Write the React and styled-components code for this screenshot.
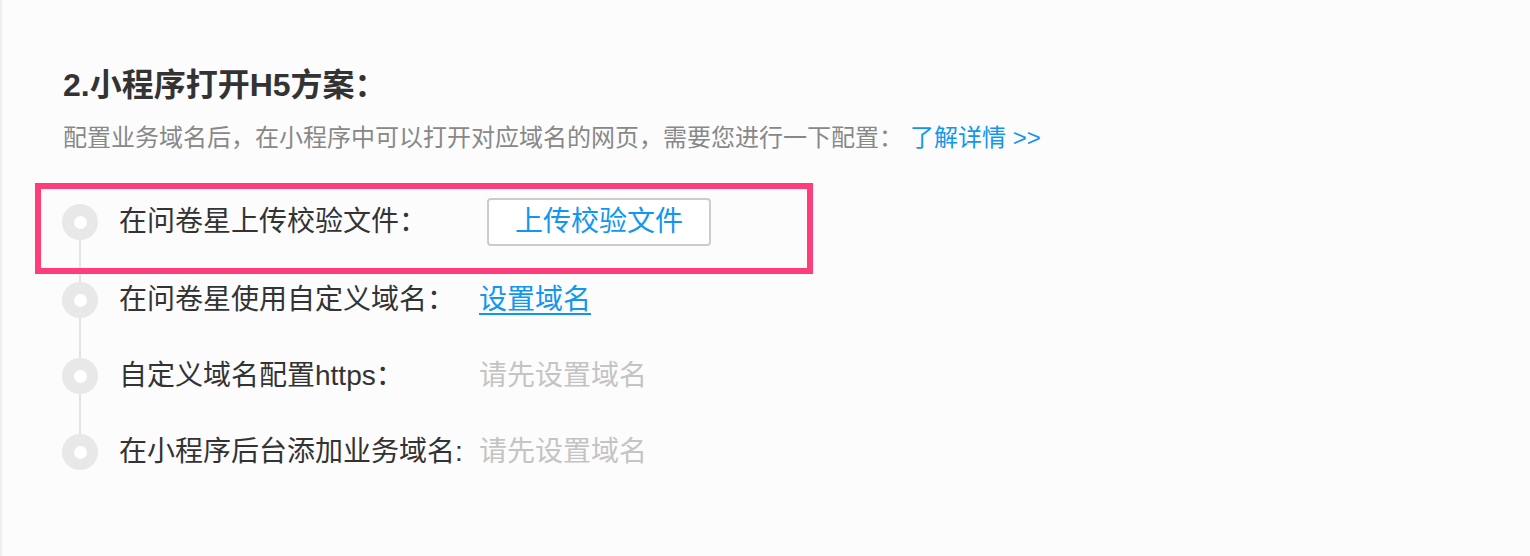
import styled, { createGlobalStyle } from 'styled-components'

const GlobalStyle = createGlobalStyle`
  html, body {
    margin: 0;
    padding: 0;
  }
  body {
    font-family: "Liberation Sans", "Noto Sans CJK SC", sans-serif;
    background: #fcfcfc;
  }
`

const Page = styled.div`
  box-sizing: border-box;
  height: 556px;
  border-left: 2px solid #eeeeee;
  background: #fcfcfc;
  padding: 65px 0 0 61px;
`

const Title = styled.h2`
  margin: 0;
  font-size: 32px;
  line-height: 40px;
  font-weight: bold;
  color: #333333;
`

const Desc = styled.p`
  margin: 17px 0 0;
  font-size: 24px;
  line-height: 32px;
  color: #888888;
`

const DescLink = styled.a`
  margin-left: 7px;
  color: #1296f0;
  text-decoration: none;
  cursor: pointer;
`

const Steps = styled.div`
  margin: 28px 0 0 -1px;
  display: flex;
  flex-direction: column;
`

const Step = styled.div`
  position: relative;
  display: flex;
  align-items: center;
  height: ${p => (p.$tall ? 80 : 76)}px;

  &::after {
    content: '';
    display: ${p => (p.$last ? 'none' : 'block')};
    position: absolute;
    left: 17px;
    top: 50%;
    width: 2px;
    height: calc(50% + 38px);
    background: #e4e4e4;
  }
`

const Marker = styled.span`
  position: relative;
  z-index: 1;
  flex: none;
  box-sizing: border-box;
  width: 36px;
  height: 36px;
  border-radius: 50%;
  background: #e8e8e8;
  display: flex;
  align-items: center;
  justify-content: center;

  &::before {
    content: '';
    width: 13px;
    height: 13px;
    border-radius: 50%;
    background: #ffffff;
  }
`

const Label = styled.span`
  flex: none;
  width: 360px;
  margin-left: 21px;
  font-size: 28px;
  line-height: 40px;
  color: #333333;
  white-space: nowrap;
`

const Value = styled.span`
  font-size: 28px;
  line-height: 40px;
  color: ${p => (p.$muted ? '#c4c4c4' : '#1296f0')};
  text-decoration: ${p => (p.$link ? 'underline' : 'none')};
  text-underline-offset: 4px;
  text-decoration-thickness: 2px;
  cursor: ${p => (p.$link ? 'pointer' : 'default')};
`

const UploadButton = styled.button`
  margin-left: 8px;
  box-sizing: border-box;
  height: 48px;
  padding: 0 26px;
  border: 2px solid #cccccc;
  border-radius: 4px;
  background: #ffffff;
  color: #1296f0;
  font-family: inherit;
  font-size: 28px;
  line-height: 44px;
  cursor: pointer;
`

const Highlight = styled.div`
  position: absolute;
  z-index: 2;
  top: 1px;
  left: -27px;
  width: 778px;
  height: 91px;
  box-sizing: border-box;
  border: 6px solid #ff3d7b;
  pointer-events: none;
`

const App = () => {
  return (
    <>
      <GlobalStyle />
      <Page>
        <Title>2.小程序打开H5方案：</Title>
        <Desc>
          配置业务域名后，在小程序中可以打开对应域名的网页，需要您进行一下配置：
          <DescLink>了解详情 &gt;&gt;</DescLink>
        </Desc>
        <Steps>
          <Step $tall>
            <Marker />
            <Label>在问卷星上传校验文件：</Label>
            <UploadButton>上传校验文件</UploadButton>
            <Highlight />
          </Step>
          <Step>
            <Marker />
            <Label>在问卷星使用自定义域名：</Label>
            <Value $link>设置域名</Value>
          </Step>
          <Step>
            <Marker />
            <Label>自定义域名配置https：</Label>
            <Value $muted>请先设置域名</Value>
          </Step>
          <Step $last>
            <Marker />
            <Label>在小程序后台添加业务域名:</Label>
            <Value $muted>请先设置域名</Value>
          </Step>
        </Steps>
      </Page>
    </>
  )
}

export default App
